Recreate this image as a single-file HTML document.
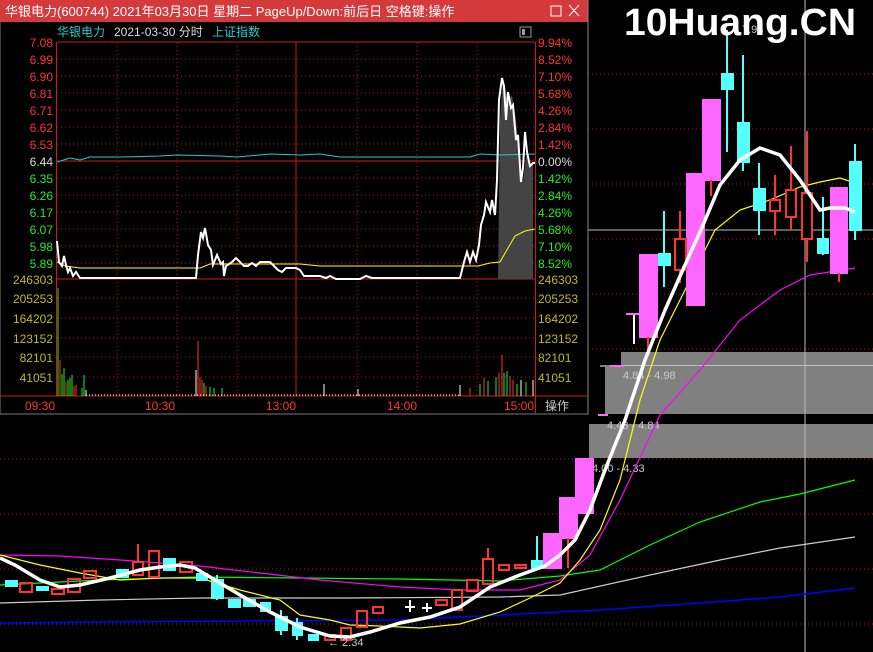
<!DOCTYPE html>
<html><head><meta charset="utf-8"><style>
html,body{margin:0;padding:0;background:#000;width:873px;height:652px;overflow:hidden}
svg{display:block}
text{font-family:"Liberation Sans","Noto Sans CJK SC",sans-serif}
</style></head><body>
<svg width="873" height="652" viewBox="0 0 873 652" xmlns="http://www.w3.org/2000/svg">
<rect width="873" height="652" fill="#000"/>
<g stroke="#b01818" stroke-dasharray="1,3" stroke-width="1">
<line x1="588" y1="74" x2="873" y2="74"/><line x1="588" y1="129" x2="873" y2="129"/>
<line x1="588" y1="184" x2="873" y2="184"/><line x1="588" y1="239" x2="873" y2="239"/>
<line x1="588" y1="294" x2="873" y2="294"/><line x1="588" y1="349" x2="873" y2="349"/>
<line x1="0" y1="459" x2="873" y2="459"/><line x1="0" y1="514" x2="873" y2="514"/>
<line x1="0" y1="569" x2="873" y2="569"/><line x1="0" y1="624" x2="873" y2="624"/>
</g>
<rect x="621" y="352" width="252" height="14" fill="#808080"/>
<rect x="605" y="367" width="268" height="47" fill="#808080"/>
<rect x="589" y="424" width="284" height="34" fill="#808080"/>
<line x1="600" y1="366" x2="873" y2="366" stroke="#fff"/>
<line x1="588" y1="230" x2="873" y2="230" stroke="#bbb"/>
<line x1="805" y1="0" x2="805" y2="652" stroke="#bbb"/>
<text x="623" y="379" font-size="11" fill="#ccc">4.84 - 4.98</text>
<text x="607" y="429" font-size="11" fill="#ccc">4.48 - 4.84</text>
<text x="592" y="472" font-size="11" fill="#ccc">4.00 - 4.33</text>
<g fill="none">
<polyline stroke="#00f" stroke-width="1.5" points="0,623 100,622 250,621 400,620 500,615 560,612 600,610 700,603 780,597 855,588"/>
<polyline stroke="#ccc" stroke-width="1.2" points="0,603 100,600 200,598 350,598 500,597 560,595 650,575 720,560 780,548 855,537"/>
<polyline stroke="#0f0" stroke-width="1.2" points="0,585 100,580 200,577 300,578 400,579 500,581 560,576 600,570 650,545 700,522 760,502 800,494 855,480"/>
<polyline stroke="#f0f" stroke-width="1.2" points="0,555 60,556 120,560 200,566 260,573 320,580 400,587 460,590 520,590 560,580 590,555 620,500 660,415 700,370 740,320 780,290 810,275 855,268"/>
<polyline stroke="#ff0" stroke-width="1.2" points="0,555 40,565 80,573 120,580 160,578 200,578 240,590 280,600 300,615 330,620 350,625 380,626 420,628 460,624 500,612 530,598 560,583 580,560 600,530 620,480 640,400 660,340 690,280 715,230 740,210 770,200 800,187 820,182 840,178 855,183"/>
</g>
<g stroke-width="2">
<g fill="#5ff" stroke="#5ff">
<rect x="6" y="581" width="11" height="5"/><rect x="37" y="587" width="11" height="3"/>
<rect x="117" y="570" width="11" height="7"/><rect x="164" y="559" width="11" height="11"/>
<rect x="197" y="574" width="10" height="6"/><rect x="212" y="580" width="11" height="18"/>
<rect x="229" y="600" width="11" height="7"/><rect x="244" y="600" width="11" height="6"/>
<rect x="261" y="603" width="9" height="8"/><rect x="276" y="617" width="11" height="13"/>
<rect x="293" y="623" width="9" height="12"/><rect x="309" y="635" width="9" height="5"/>
<rect x="532" y="561" width="11" height="7"/>
<line x1="537" y1="536" x2="537" y2="568"/><line x1="217" y1="575" x2="217" y2="600"/>
<line x1="281" y1="610" x2="281" y2="635"/><line x1="297" y1="618" x2="297" y2="640"/>
</g>
<g fill="none" stroke="#f33">
<rect x="20" y="583" width="12" height="9"/><rect x="52" y="589" width="12" height="5"/>
<rect x="68" y="579" width="12" height="13"/><rect x="84" y="571" width="12" height="7"/>
<rect x="133" y="562" width="10" height="13"/><line x1="138" y1="544" x2="138" y2="562"/>
<rect x="149" y="551" width="10" height="26"/><rect x="180" y="562" width="12" height="10"/>
<rect x="325" y="635" width="10" height="5"/><rect x="341" y="628" width="10" height="12"/>
<rect x="357" y="611" width="10" height="16"/><rect x="373" y="607" width="10" height="6"/>
<rect x="436" y="600" width="11" height="5"/><rect x="452" y="590" width="10" height="20"/>
<rect x="467" y="580" width="11" height="11"/><rect x="483" y="559" width="10" height="25"/>
<line x1="488" y1="548" x2="488" y2="559"/>
<rect x="499" y="565" width="10" height="5"/><rect x="515" y="565" width="11" height="3"/>
</g>
<g stroke="#fff"><line x1="410" y1="600" x2="410" y2="612"/><line x1="405" y1="607" x2="415" y2="607"/>
<line x1="427" y1="603" x2="427" y2="612"/><line x1="422" y1="608" x2="432" y2="608"/></g>
</g>
<g stroke-width="2">
<g fill="#f6f" stroke="#f6f">
<rect x="544" y="534" width="17" height="34"/><rect x="560" y="498" width="17" height="40"/>
<rect x="576" y="459" width="17" height="54"/>
<rect x="640" y="255" width="17" height="82"/><rect x="687" y="174" width="17" height="131"/>
<rect x="703" y="100" width="17" height="80"/><rect x="831" y="188" width="16" height="85"/>
</g>
<g stroke="#f33"><line x1="648" y1="337" x2="648" y2="352"/><line x1="711" y1="180" x2="711" y2="196"/><line x1="839" y1="273" x2="839" y2="282"/><line x1="568" y1="538" x2="568" y2="568"/></g>
<g fill="#5ff" stroke="#5ff">
<line x1="664" y1="211" x2="664" y2="287"/><rect x="659" y="254" width="11" height="11"/>
<line x1="727" y1="30" x2="727" y2="152"/><rect x="722" y="74" width="11" height="15"/>
<line x1="743" y1="55" x2="743" y2="171"/><rect x="738" y="123" width="11" height="39"/>
<line x1="759" y1="163" x2="759" y2="235"/><rect x="754" y="189" width="11" height="21"/>
<line x1="823" y1="197" x2="823" y2="255"/><rect x="818" y="239" width="10" height="14"/>
<line x1="855" y1="144" x2="855" y2="240"/><rect x="850" y="162" width="11" height="68"/>
</g>
<g fill="none" stroke="#f33">
<line x1="680" y1="211" x2="680" y2="283"/><rect x="675" y="239" width="11" height="31" fill="#000"/>
<line x1="775" y1="175" x2="775" y2="235"/><rect x="770" y="200" width="10" height="11" fill="#000"/>
<line x1="791" y1="146" x2="791" y2="230"/><rect x="786" y="190" width="10" height="27" fill="#000"/>
<line x1="807" y1="131" x2="807" y2="262"/><rect x="802" y="193" width="10" height="46" fill="#000"/>
</g>
<g stroke="#fff"><line x1="634" y1="314" x2="634" y2="344"/></g>
<line x1="626" y1="314" x2="640" y2="314" stroke="#f6f"/>
<line x1="610" y1="366" x2="624" y2="366" stroke="#f6f"/>
<line x1="598" y1="415" x2="608" y2="415" stroke="#f6f"/>
</g>
<polyline fill="none" stroke="#fff" stroke-width="3.5" points="0,558 15,565 40,580 60,587 80,585 110,578 140,570 160,567 180,565 195,568 215,580 240,595 270,612 300,627 330,636 350,637 370,632 400,623 430,617 460,607 490,587 520,575 545,566 560,555 575,540 590,510 605,470 625,420 645,360 665,310 685,265 700,232 720,185 740,160 760,148 780,155 800,180 820,210 830,208 845,208 855,212"/>
<text x="328" y="646" font-size="11" fill="#ccc">← 2.34</text>
<text x="742" y="33" font-size="11" fill="#ccc">7.96</text>
<text x="624" y="35" font-size="38" font-weight="bold" fill="#fff" font-family="DejaVu Sans,sans-serif" textLength="232" lengthAdjust="spacingAndGlyphs">10Huang.CN</text>

<!-- Popup -->
<rect x="0" y="0" width="588" height="414" fill="#000" stroke="#777"/>
<rect x="0" y="0" width="588" height="22" fill="#d43a3c"/>
<text x="5" y="16" font-size="13" fill="#fff">华银电力(600744) 2021年03月30日 星期二 PageUp/Down:前后日 空格键:操作</text>
<rect x="551" y="6" width="10" height="10" fill="none" stroke="#fff"/>
<path d="M569 5 L579 16 M579 5 L569 16" stroke="#fff"/>
<text x="57" y="36" font-size="12" fill="#2cc">华银电力</text>
<text x="114" y="36" font-size="12" fill="#ddd">2021-03-30 分时</text>
<text x="212" y="36" font-size="12" fill="#2cc">上证指数</text>
<rect x="520" y="27" width="11" height="10" fill="none" stroke="#999"/><rect x="522" y="29" width="3" height="6" fill="#999"/>
<g stroke="#b01818" stroke-dasharray="1,3">
<line x1="57" y1="59" x2="535" y2="59"/><line x1="57" y1="76" x2="535" y2="76"/><line x1="57" y1="93" x2="535" y2="93"/>
<line x1="57" y1="110" x2="535" y2="110"/><line x1="57" y1="127" x2="535" y2="127"/><line x1="57" y1="144" x2="535" y2="144"/>
<line x1="57" y1="178" x2="535" y2="178"/><line x1="57" y1="195" x2="535" y2="195"/><line x1="57" y1="212" x2="535" y2="212"/>
<line x1="57" y1="229" x2="535" y2="229"/><line x1="57" y1="246" x2="535" y2="246"/><line x1="57" y1="263" x2="535" y2="263"/>
<line x1="57" y1="298" x2="535" y2="298"/><line x1="57" y1="318" x2="535" y2="318"/><line x1="57" y1="338" x2="535" y2="338"/>
<line x1="57" y1="357" x2="535" y2="357"/><line x1="57" y1="377" x2="535" y2="377"/>
<line x1="117" y1="42" x2="117" y2="396"/><line x1="177" y1="42" x2="177" y2="396"/><line x1="237" y1="42" x2="237" y2="396"/>
<line x1="357" y1="42" x2="357" y2="396"/><line x1="417" y1="42" x2="417" y2="396"/><line x1="477" y1="42" x2="477" y2="396"/>
</g>
<g stroke="#d01818">
<line x1="57" y1="42" x2="535" y2="42"/><line x1="57" y1="161" x2="535" y2="161"/><line x1="57" y1="279" x2="535" y2="279"/>
<line x1="0" y1="396" x2="588" y2="396"/><line x1="56.5" y1="42" x2="56.5" y2="396"/><line x1="535.5" y1="42" x2="535.5" y2="414"/>
<line x1="296" y1="42" x2="296" y2="396"/>
</g>
<g font-size="12" text-anchor="end">
<g fill="#f33"><text x="53" y="47">7.08</text><text x="53" y="64">6.99</text><text x="53" y="81">6.90</text><text x="53" y="98">6.81</text><text x="53" y="115">6.71</text><text x="53" y="132">6.62</text><text x="53" y="149">6.53</text></g>
<text x="53" y="166" fill="#ddd">6.44</text>
<g fill="#2e2"><text x="53" y="183">6.35</text><text x="53" y="200">6.26</text><text x="53" y="217">6.17</text><text x="53" y="234">6.07</text><text x="53" y="251">5.98</text><text x="53" y="268">5.89</text></g>
<g fill="#bb2"><text x="53" y="284">246303</text><text x="53" y="303">205253</text><text x="53" y="323">164202</text><text x="53" y="343">123152</text><text x="53" y="362">82101</text><text x="53" y="382">41051</text></g>
</g>
<g font-size="12">
<g fill="#f33"><text x="538" y="47">9.94%</text><text x="538" y="64">8.52%</text><text x="538" y="81">7.10%</text><text x="538" y="98">5.68%</text><text x="538" y="115">4.26%</text><text x="538" y="132">2.84%</text><text x="538" y="149">1.42%</text></g>
<text x="538" y="166" fill="#ddd">0.00%</text>
<g fill="#2e2"><text x="538" y="183">1.42%</text><text x="538" y="200">2.84%</text><text x="538" y="217">4.26%</text><text x="538" y="234">5.68%</text><text x="538" y="251">7.10%</text><text x="538" y="268">8.52%</text></g>
<g fill="#bb2"><text x="538" y="284">246303</text><text x="538" y="303">205253</text><text x="538" y="323">164202</text><text x="538" y="343">123152</text><text x="538" y="362">82101</text><text x="538" y="382">41051</text></g>
<g fill="#f33" text-anchor="middle"><text x="40" y="410">09:30</text><text x="160" y="410">10:30</text><text x="281" y="410">13:00</text><text x="402" y="410">14:00</text><text x="519" y="410">15:00</text></g>
<text x="545" y="410" fill="#ccc">操作</text>
</g>
<polygon fill="#444" points="498,279 500,120 503,78 508,100 512,95 516,120 520,160 523,182 527,150 530,165 533,165 533,279"/>
<polyline fill="none" stroke="#2cc" stroke-width="1" points="57,162 70,158 80,160 90,157 120,157 160,156 177,155 220,156 237,157 270,154 300,155 320,154 340,157 400,157 470,157 480,154 500,155 535,154"/>
<polyline fill="none" stroke="#ff0" stroke-width="1" points="57,262 65,266 80,268 200,268 210,264 260,264 300,264 320,266 460,266 478,266 490,263 500,262 508,248 515,236 525,231 535,229"/>
<polyline fill="none" stroke="#fff" stroke-width="2" points="57,241 59,262 62,266 64,256 66,265 68,272 70,268 73,276 76,272 80,278 140,278 196,278 198,255 201,232 203,238 205,228 208,245 211,250 213,265 217,255 221,264 223,262 224,276 226,266 232,262 236,258 240,262 244,266 248,266 252,263 256,266 260,262 270,262 274,266 278,270 282,272 286,268 296,268 300,270 304,276 320,276 326,278 330,276 336,279 360,279 366,276 372,278 460,278 464,262 467,252 470,262 473,252 476,260 479,245 481,225 484,215 486,202 490,212 492,200 495,215 497,180 499,100 502,78 504,86 506,120 508,92 511,108 513,105 516,140 518,135 521,182 523,168 525,132 527,152 530,166 533,163 535,163"/>
<g stroke-width="1">
<line x1="58" y1="396" x2="58" y2="288" stroke="#2e2"/>
<line x1="60" y1="396" x2="60" y2="360" stroke="#f33"/>
<line x1="62" y1="396" x2="62" y2="374" stroke="#2e2"/><line x1="64" y1="396" x2="64" y2="368" stroke="#2e2"/>
<line x1="66" y1="396" x2="66" y2="382" stroke="#f33"/><line x1="68" y1="396" x2="68" y2="380" stroke="#2e2"/>
<line x1="70" y1="396" x2="70" y2="378" stroke="#2e2"/><line x1="72" y1="396" x2="72" y2="375" stroke="#2e2"/>
<line x1="74" y1="396" x2="74" y2="386" stroke="#f33"/><line x1="76" y1="396" x2="76" y2="385" stroke="#f33"/>
<line x1="82" y1="396" x2="82" y2="388" stroke="#2e2"/><line x1="84" y1="396" x2="84" y2="375" stroke="#2e2"/>
<line x1="86" y1="396" x2="86" y2="390" stroke="#fff"/>
<line x1="196" y1="396" x2="196" y2="370" stroke="#fff"/><line x1="198" y1="396" x2="198" y2="341" stroke="#f33"/>
<line x1="200" y1="396" x2="200" y2="377" stroke="#f33"/><line x1="202" y1="396" x2="202" y2="380" stroke="#f33"/>
<line x1="204" y1="396" x2="204" y2="383" stroke="#2e2"/><line x1="206" y1="396" x2="206" y2="386" stroke="#f33"/>
<line x1="210" y1="396" x2="210" y2="387" stroke="#2e2"/><line x1="214" y1="396" x2="214" y2="388" stroke="#2e2"/>
<line x1="222" y1="396" x2="222" y2="388" stroke="#2e2"/><line x1="324" y1="396" x2="324" y2="384" stroke="#fff"/>
<line x1="358" y1="396" x2="358" y2="389" stroke="#fff"/>
<line x1="460" y1="396" x2="460" y2="385" stroke="#fff"/><line x1="470" y1="396" x2="470" y2="388" stroke="#f33"/>
<line x1="480" y1="396" x2="480" y2="384" stroke="#2e2"/><line x1="484" y1="396" x2="484" y2="378" stroke="#f33"/>
<line x1="488" y1="396" x2="488" y2="381" stroke="#2e2"/><line x1="496" y1="396" x2="496" y2="377" stroke="#2e2"/>
<line x1="499" y1="396" x2="499" y2="373" stroke="#f33"/><line x1="502" y1="396" x2="502" y2="355" stroke="#f33"/>
<line x1="504" y1="396" x2="504" y2="373" stroke="#2e2"/><line x1="507" y1="396" x2="507" y2="371" stroke="#2e2"/>
<line x1="510" y1="396" x2="510" y2="376" stroke="#f33"/><line x1="513" y1="396" x2="513" y2="380" stroke="#f33"/>
<line x1="517" y1="396" x2="517" y2="384" stroke="#2e2"/><line x1="521" y1="396" x2="521" y2="380" stroke="#fff"/>
<line x1="526" y1="396" x2="526" y2="382" stroke="#2e2"/><line x1="533" y1="396" x2="533" y2="380" stroke="#fff"/>
</g>
<line x1="86" y1="395" x2="460" y2="395" stroke="#fff" stroke-dasharray="1,2"/>
<line x1="588" y1="0" x2="588" y2="414" stroke="#888"/>
</svg>
</body></html>
